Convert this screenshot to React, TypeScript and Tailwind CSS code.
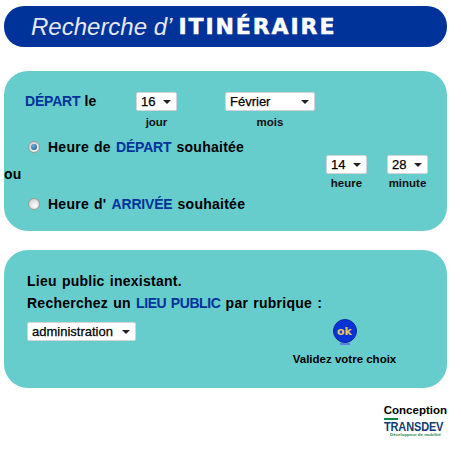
function Sel({ label, w }: { label: string; w: string }) {
  return (
    <div className={`${w} h-[19px] bg-white border border-[#d4d4d4] rounded-[2px] flex items-center justify-between pl-[4px] pr-[5px] leading-none text-black font-normal tracking-normal [word-spacing:0]`}>
      <span className="text-[13px] [-webkit-text-stroke:0.25px_#000]">{label}</span>
      <svg width="8" height="4" viewBox="0 0 8 4" className="shrink-0"><path d="M0 0h8L4 4z" fill="#222" /></svg>
    </div>
  );
}

function Radio({ on }: { on?: boolean }) {
  return (
    <div className="w-[12px] h-[12px] rounded-full border border-[#9a9a9a] bg-[radial-gradient(circle_at_60%_65%,#ffffff,#c4c4c4)] flex items-center justify-center shrink-0">
      {on && <div className="w-[6px] h-[6px] rounded-full bg-[radial-gradient(circle_at_40%_35%,#6fb5e0,#0b4a80)]" />}
    </div>
  );
}

const B = ({ children }: { children: React.ReactNode }) => <span className="text-[#003399] tracking-[-0.2px]">{children}</span>;

function Field({ label, w, sel, lm }: { label: string; w: string; sel: string; lm: string }) {
  return (
    <div className={`${w} flex flex-col items-center`}>
      <Sel label={sel} w={w} />
      <div className={`${lm} text-[11.5px] tracking-normal [word-spacing:0] leading-[14px] font-bold text-[#111] whitespace-nowrap`}>{label}</div>
    </div>
  );
}

export default function App() {
  return (
    <div className="w-[461px] h-[456px] bg-white pl-[4px] pr-[14px] pt-[6px] font-['Liberation_Sans',Arial,sans-serif] text-black overflow-hidden">
      <div className="h-[41px] rounded-[20px] bg-[#003399] flex items-center pl-[27px] text-[24px] leading-none">
        <span className="italic text-[#e6e8f2]">Recherche d’</span>
        <span className="ml-[6px] font-['DejaVu_Sans',sans-serif] font-bold text-white text-[22px] tracking-[1.9px] [-webkit-text-stroke:0.5px_#fff]">ITINÉRAIRE</span>
      </div>

      <div className="mt-[24px] h-[160px] rounded-[24px] bg-[#66CCCC] pt-[21px] text-[14px] font-bold tracking-[0.25px] [word-spacing:1px]">
        <div className="flex items-start">
          <div className="ml-[21px] w-[111px] leading-[19px] [word-spacing:0]"><B>DÉPART</B> le</div>
          <Field label="jour" w="w-[41px]" sel="16" lm="mt-[4px]" />
          <div className="w-[48px]" />
          <Field label="mois" w="w-[90px]" sel="Février" lm="mt-[4px]" />
        </div>
        <div className="mt-[8px] flex items-start">
          <div className="flex flex-col">
            <div className="flex items-center h-[20px] pl-[24px]">
              <Radio on />
              <span className="ml-[8px]">Heure de <B>DÉPART</B> souhaitée</span>
            </div>
            <div className="h-[20px] mt-[7px] leading-[20px]">ou</div>
            <div className="flex items-center h-[20px] mt-[10px] pl-[24px]">
              <Radio />
              <span className="ml-[8px]">Heure d' <B>ARRIVÉE</B> souhaitée</span>
            </div>
          </div>
          <div className="ml-auto mr-[19px] mt-[18px] flex gap-[20px]">
            <Field label="heure" w="w-[41px]" sel="14" lm="mt-[2px]" />
            <Field label="minute" w="w-[41px]" sel="28" lm="mt-[2px]" />
          </div>
        </div>
      </div>

      <div className="mt-[19px] h-[138px] rounded-[24px] bg-[#66CCCC] pl-[23px] pt-[21px] text-[14px] font-bold tracking-[0.25px] [word-spacing:1px]">
        <div className="leading-[20px]">Lieu public inexistant.</div>
        <div className="mt-[2px] leading-[20px]">Recherchez un <span className="text-[#003399] tracking-[-0.4px]">LIEU PUBLIC</span> par rubrique :</div>
        <div className="flex items-start">
          <div className="mt-[9px]"><Sel label="administration" w="w-[109px]" /></div>
          <div className="ml-[156px] flex flex-col items-center w-[105px] mt-[6px] tracking-normal [word-spacing:0]">
            <div className="w-[24px] h-[26px] flex flex-col items-center">
              <div className="w-[24px] h-[24px] rounded-full bg-[#0a33d6] border border-[#08269c] flex items-center justify-center text-[11px] leading-none font-['DejaVu_Sans',sans-serif] font-bold text-[#e8c860]">ok</div>
              <div className="w-[10px] h-[2px] bg-[#5f7fe0]" />
            </div>
            <div className="mt-[7px] text-[11.5px] leading-[14px] whitespace-nowrap">Validez votre choix</div>
          </div>
        </div>
      </div>

      <div className="flex flex-col items-end mt-[15px]">
        <div className="text-[11.5px] leading-[14px] font-bold">Conception</div>
        <div className="mt-[1px] w-[60px] mr-[3px] flex flex-col items-start">
          <div className="w-[14px] h-[2px] bg-[#0b8a4a]" />
          <div className="text-[11px] leading-[10px] h-[12px] font-bold text-[#123a73] tracking-[-0.15px] scale-y-[1.2] origin-top whitespace-nowrap">TRANSDEV</div>
          <div className="text-[4.4px] leading-[5px] ml-[6px] font-bold text-[#1f8a4c] whitespace-nowrap">Développeur de mobilité</div>
        </div>
      </div>
    </div>
  );
}
